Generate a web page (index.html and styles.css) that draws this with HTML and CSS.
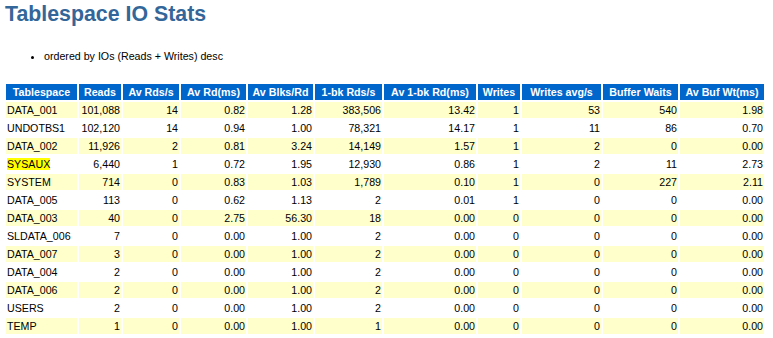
FILE: index.html
```html
<!DOCTYPE html>
<html lang="en">
<head>
    <meta charset="UTF-8">
    <title>Tablespace IO Stats</title>
    <link rel="stylesheet" href="styles.css">
</head>
<body>
    <h3>Tablespace IO Stats</h3>
    <ul>
        <li>ordered by IOs (Reads + Writes) desc</li>
    </ul>

    <table class="iostats">
        <tr>
            <th>Tablespace</th>
            <th>Reads</th>
            <th>Av Rds/s</th>
            <th>Av Rd(ms)</th>
            <th>Av Blks/Rd</th>
            <th>1-bk Rds/s</th>
            <th>Av 1-bk Rd(ms)</th>
            <th>Writes</th>
            <th>Writes avg/s</th>
            <th>Buffer Waits</th>
            <th>Av Buf Wt(ms)</th>
        </tr>
        <tr class="alt">
            <td class="name">DATA_001</td><td>101,088</td><td>14</td><td>0.82</td><td>1.28</td><td>383,506</td><td>13.42</td><td>1</td><td>53</td><td>540</td><td>1.98</td>
        </tr>
        <tr>
            <td class="name">UNDOTBS1</td><td>102,120</td><td>14</td><td>0.94</td><td>1.00</td><td>78,321</td><td>14.17</td><td>1</td><td>11</td><td>86</td><td>0.70</td>
        </tr>
        <tr class="alt">
            <td class="name">DATA_002</td><td>11,926</td><td>2</td><td>0.81</td><td>3.24</td><td>14,149</td><td>1.57</td><td>1</td><td>2</td><td>0</td><td>0.00</td>
        </tr>
        <tr>
            <td class="name"><mark>SYSAUX</mark></td><td>6,440</td><td>1</td><td>0.72</td><td>1.95</td><td>12,930</td><td>0.86</td><td>1</td><td>2</td><td>11</td><td>2.73</td>
        </tr>
        <tr class="alt">
            <td class="name">SYSTEM</td><td>714</td><td>0</td><td>0.83</td><td>1.03</td><td>1,789</td><td>0.10</td><td>1</td><td>0</td><td>227</td><td>2.11</td>
        </tr>
        <tr>
            <td class="name">DATA_005</td><td>113</td><td>0</td><td>0.62</td><td>1.13</td><td>2</td><td>0.01</td><td>1</td><td>0</td><td>0</td><td>0.00</td>
        </tr>
        <tr class="alt">
            <td class="name">DATA_003</td><td>40</td><td>0</td><td>2.75</td><td>56.30</td><td>18</td><td>0.00</td><td>0</td><td>0</td><td>0</td><td>0.00</td>
        </tr>
        <tr>
            <td class="name">SLDATA_006</td><td>7</td><td>0</td><td>0.00</td><td>1.00</td><td>2</td><td>0.00</td><td>0</td><td>0</td><td>0</td><td>0.00</td>
        </tr>
        <tr class="alt">
            <td class="name">DATA_007</td><td>3</td><td>0</td><td>0.00</td><td>1.00</td><td>2</td><td>0.00</td><td>0</td><td>0</td><td>0</td><td>0.00</td>
        </tr>
        <tr>
            <td class="name">DATA_004</td><td>2</td><td>0</td><td>0.00</td><td>1.00</td><td>2</td><td>0.00</td><td>0</td><td>0</td><td>0</td><td>0.00</td>
        </tr>
        <tr class="alt">
            <td class="name">DATA_006</td><td>2</td><td>0</td><td>0.00</td><td>1.00</td><td>2</td><td>0.00</td><td>0</td><td>0</td><td>0</td><td>0.00</td>
        </tr>
        <tr>
            <td class="name">USERS</td><td>2</td><td>0</td><td>0.00</td><td>1.00</td><td>2</td><td>0.00</td><td>0</td><td>0</td><td>0</td><td>0.00</td>
        </tr>
        <tr class="alt">
            <td class="name">TEMP</td><td>1</td><td>0</td><td>0.00</td><td>1.00</td><td>1</td><td>0.00</td><td>0</td><td>0</td><td>0</td><td>0.00</td>
        </tr>
    </table>
</body>
</html>
```
FILE: styles.css
```css
body {
    font-family: "Liberation Sans", Arial, Helvetica, sans-serif;
    color: black;
    background: white;
    margin: 0 4px;
}

h3 {
    font: bold 16pt "Liberation Sans", Arial, Helvetica, sans-serif;
    color: #336699;
    margin: 2px 0 0 1px;
}

ul {
    margin: 23px 0 0;
    padding-left: 40px;
}

li {
    font-size: 8pt;
}

.iostats {
    margin-top: 20px;
    border: 0;
    border-spacing: 2px;
}

.iostats th {
    font: bold 8pt/13px "Liberation Sans", Arial, Helvetica, sans-serif;
    color: white;
    background: #0066cc;
    padding: 2px 4px 1px;
    text-align: center;
}

.iostats td {
    font: 8pt/13px "Liberation Sans", Arial, Helvetica, sans-serif;
    color: black;
    background: white;
    padding: 2px 1px 1px;
    text-align: right;
    vertical-align: top;
}

.iostats tr.alt td {
    background: #ffffcc;
}

.iostats td.name {
    text-align: left;
}

mark {
    background: #ffff00;
    color: black;
}

/* column widths (content box, cells add 8px of padding) */
.iostats th:nth-child(1) { width: 63px; }
.iostats th:nth-child(2) { width: 34px; }
.iostats th:nth-child(3) { width: 48px; }
.iostats th:nth-child(4) { width: 57px; }
.iostats th:nth-child(5) { width: 57px; }
.iostats th:nth-child(6) { width: 59px; }
.iostats th:nth-child(7) { width: 84px; }
.iostats th:nth-child(8) { width: 34px; }
.iostats th:nth-child(9) { width: 71px; }
.iostats th:nth-child(10) { width: 67px; }
.iostats th:nth-child(11) { width: 76px; }
```
